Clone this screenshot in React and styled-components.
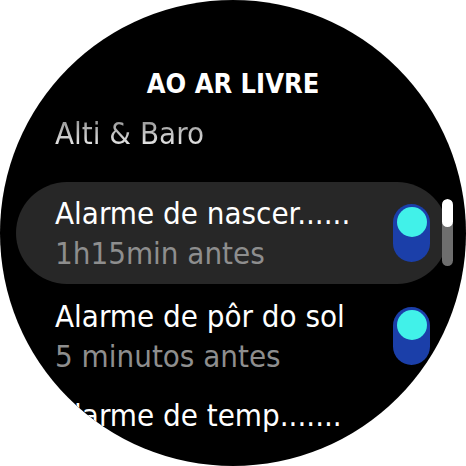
import React from "react";
import styled, { createGlobalStyle } from "styled-components";

const GlobalStyle = createGlobalStyle`
  html, body {
    margin: 0;
    padding: 0;
    background: #ffffff;
  }
  body {
    font-family: "DejaVu Sans Condensed", "DejaVu Sans", sans-serif;
  }
`;

const rows = [
  { title: "Alarme de nascer......", sub: "1h15min antes", on: true, active: true },
  { title: "Alarme de pôr do sol", sub: "5 minutos antes", on: true },
  { title: "Alarme de temp.......", sub: "" },
];

function Toggle({ on }) {
  return (
    <Pill $on={on}>
      <Knob />
    </Pill>
  );
}

function App() {
  return (
    <>
      <GlobalStyle />
      <Watch>
        <Title>AO AR LIVRE</Title>
        <FadedRow>Alti &amp; Baro</FadedRow>
        {rows.map((r) => (
          <Row key={r.title} $active={r.active}>
            <Texts>
              <Primary>{r.title}</Primary>
              {r.sub && <Secondary>{r.sub}</Secondary>}
            </Texts>
            {r.on && <Toggle on={r.on} />}
          </Row>
        ))}
        <Scrollbar>
          <Thumb />
        </Scrollbar>
      </Watch>
    </>
  );
}

export default App;

const Watch = styled.div`
  position: relative;
  width: 466px;
  height: 466px;
  border-radius: 50%;
  overflow: hidden;
  background: #000;
  display: flex;
  flex-direction: column;
  padding-top: 66px;
  box-sizing: border-box;
  color: #fff;
`;

const Title = styled.div`
  text-align: center;
  font-size: 27px;
  font-weight: bold;
  line-height: 36px;
`;

const FadedRow = styled.div`
  padding: 11px 0 0 55px;
  font-size: 31px;
  line-height: 40px;
  background: linear-gradient(180deg, #7c7c7c 20%, #e8e8e8 85%);
  -webkit-background-clip: text;
  background-clip: text;
  color: transparent;
  align-self: flex-start;
  margin-bottom: 29px;
`;

const Row = styled.div`
  display: flex;
  align-items: center;
  justify-content: space-between;
  margin: 0 18px 0 16px;
  padding: ${(p) => (p.$active ? "11px 18px 11px 39px" : "12px 18px 7px 39px")};
  border-radius: 51px;
  background: ${(p) => (p.$active ? "#272727" : "transparent")};
`;

const Texts = styled.div`
  display: flex;
  flex-direction: column;
`;

const Primary = styled.div`
  font-size: 31px;
  line-height: 40px;
  color: #fff;
  white-space: nowrap;
`;

const Secondary = styled.div`
  font-size: 31px;
  line-height: 40px;
  color: #8e8e8e;
  white-space: nowrap;
`;

const Pill = styled.div`
  width: 37px;
  height: 58px;
  border-radius: 19px;
  background: ${(p) => (p.$on ? "#1b3fa9" : "#444")};
  display: flex;
  justify-content: center;
  padding-top: 3px;
  box-sizing: border-box;
  flex-shrink: 0;
`;

const Knob = styled.div`
  width: 30px;
  height: 30px;
  border-radius: 50%;
  background: #41f1e9;
`;

const Scrollbar = styled.div`
  position: absolute;
  left: 442px;
  top: 199px;
  width: 11px;
  height: 67px;
  border-radius: 6px;
  background: #6e6e6e;
  overflow: hidden;
`;

const Thumb = styled.div`
  height: 28px;
  border-radius: 6px;
  background: #fff;
`;
